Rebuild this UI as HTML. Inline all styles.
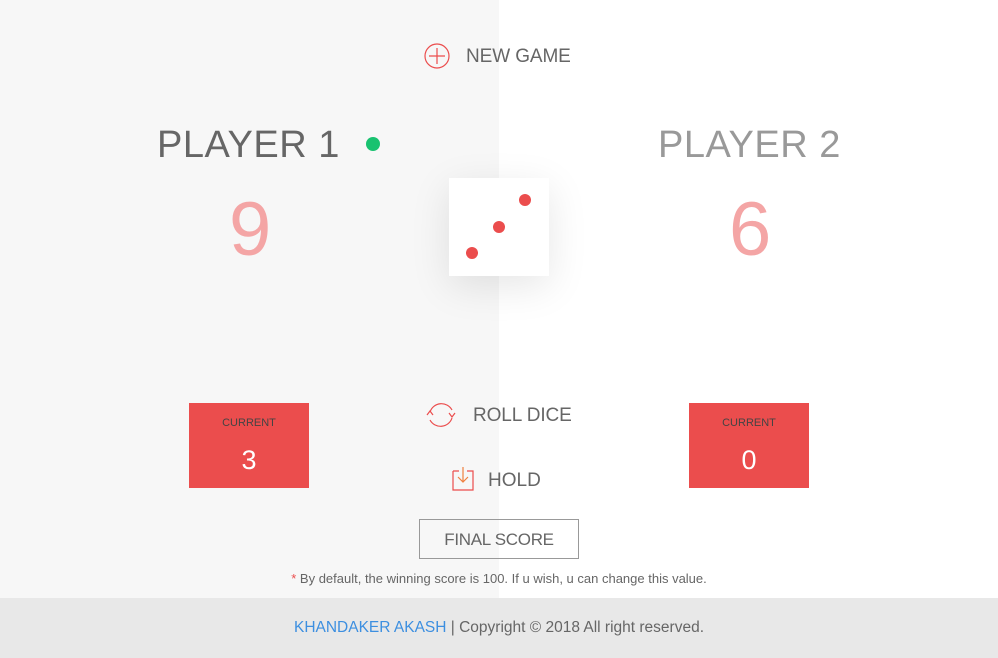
<!DOCTYPE html>
<html><head><meta charset="utf-8"><style>
*{margin:0;padding:0;box-sizing:border-box}
body{width:998px;height:658px;position:relative;font-family:"Liberation Sans",sans-serif;overflow:hidden;background:#fff}
.l{position:absolute;left:0;top:0;width:499px;height:598px;background:#f7f7f7}
.t{position:absolute;white-space:nowrap}
.foot{position:absolute;left:0;top:598px;width:998px;height:60px;background:#e8e8e8;text-align:center;line-height:60px;font-size:15px;color:#666}
.cur{position:absolute;top:403px;width:120px;height:85px;background:#eb4d4d;text-align:center}
.cur .a{position:absolute;top:14px;width:100%;font-size:11px;color:#444}
.cur .b{position:absolute;top:42px;width:100%;font-size:27px;color:#fff}
</style></head><body>
<div class="l"></div>
<svg class="t" style="left:423px;top:42px" width="28" height="28"><circle cx="14" cy="14" r="12" fill="none" stroke="#eb4d4d" stroke-width="1.2"/><path d="M14 6v16M6 14h16" stroke="#eb4d4d" stroke-width="1.2"/></svg>
<div class="t" style="left:466px;top:46px;font-size:19px;color:#666;letter-spacing:-0.1px">NEW GAME</div>
<div class="t" style="left:157px;top:124px;font-size:38px;color:#666;letter-spacing:0.5px">PLAYER 1</div>
<div class="t" style="left:366px;top:137px;width:14px;height:14px;border-radius:50%;background:#19c270"></div>
<div class="t" style="left:658px;top:124px;font-size:38px;color:#999;letter-spacing:0.5px">PLAYER 2</div>
<div class="t" style="left:229px;top:186px;font-size:76px;color:#f4a5a5">9</div>
<div class="t" style="left:729px;top:186px;font-size:76px;color:#f4a5a5">6</div>
<div class="t" style="left:449px;top:178px;width:100px;height:98px;background:#fff;box-shadow:0 10px 40px rgba(0,0,0,.1)">
<svg width="100" height="98"><circle cx="23" cy="75" r="6" fill="#eb4d4d"/><circle cx="50" cy="49" r="6" fill="#eb4d4d"/><circle cx="76" cy="22" r="6" fill="#eb4d4d"/></svg></div>
<div class="cur" style="left:189px"><div class="a">CURRENT</div><div class="b">3</div></div>
<div class="cur" style="left:689px"><div class="a">CURRENT</div><div class="b">0</div></div>
<svg class="t" style="left:425px;top:399px" width="32" height="32"><path d="M5 13A12 12 0 0 1 27 11M27 19A12 12 0 0 1 5 21" fill="none" stroke="#eb4d4d" stroke-width="1.2"/><path d="M2 16l3-4 3 4M24 14l3 4 3-4" fill="none" stroke="#eb4d4d" stroke-width="1.2"/></svg>
<div class="t" style="left:473px;top:405px;font-size:19px;color:#666;letter-spacing:-0.1px">ROLL DICE</div>
<svg class="t" style="left:451px;top:466px" width="24" height="26"><path d="M2 5h6M16 5h6v19H2V5" fill="none" stroke="#eb4d4d" stroke-width="1.2"/><path d="M12 1v15M7 11l5 5 5-5" fill="none" stroke="#f08040" stroke-width="1.2"/></svg>
<div class="t" style="left:488px;top:470px;font-size:19px;color:#666">HOLD</div>
<div class="t" style="left:419px;top:519px;width:160px;height:40px;border:1px solid #999;text-align:center;line-height:40px;font-size:17px;color:#666;letter-spacing:-0.3px">FINAL SCORE</div>
<div class="t" style="left:0;width:998px;top:571px;text-align:center;font-size:13px;color:#666"><span style="color:#eb4d4d">*</span> By default, the winning score is 100. If u wish, u can change this value.</div>
<div class="foot" style="font-size:15.5px"><span style="color:#3d8fe0">KHANDAKER AKASH</span> | Copyright © 2018 All right reserved.</div>
</body></html>
